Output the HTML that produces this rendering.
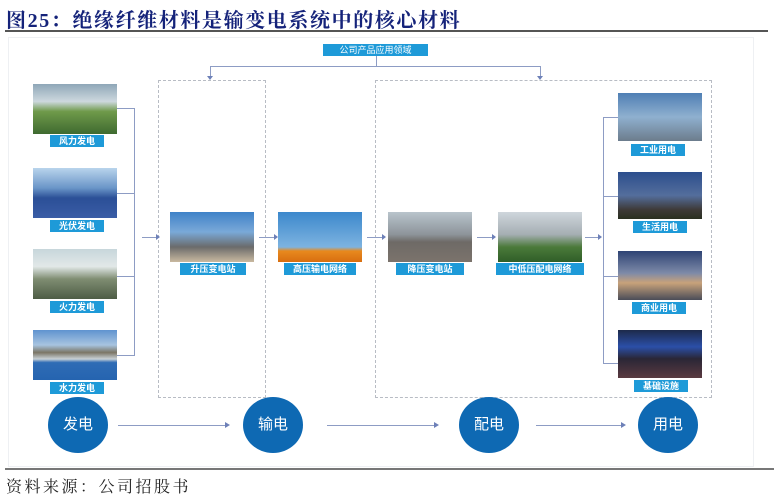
<!DOCTYPE html>
<html><head><meta charset="utf-8"><style>
body{margin:0;width:774px;height:498px;background:#fff;position:relative;overflow:hidden;font-family:"Liberation Sans","Noto Sans CJK SC",sans-serif}
.a{position:absolute}
.lbl{position:absolute;background:#1e9ad8;color:#fff;font-size:9px;font-weight:bold;text-align:center;line-height:12px;height:12px}
.img{position:absolute;width:84px;height:50px}
.c{position:absolute;width:60px;height:56px;border-radius:50%;background:#0e69b3;color:#fff;font-size:15px;text-align:center;line-height:56px}
.dash{position:absolute;border:1px dashed #b8bcc4}
.hl{position:absolute;height:1px;background:#8d9cc4}
.vl{position:absolute;width:1px;background:#8d9cc4}
</style></head><body>
<div class="a" style="left:6px;top:4px;font-family:'Liberation Serif','Noto Serif CJK SC',serif;font-size:20px;font-weight:bold;color:#15237a;letter-spacing:1.6px">图25：绝缘纤维材料是输变电系统中的核心材料</div>
<div class="a" style="left:5px;top:30px;width:763px;height:2px;background:#555"></div>
<div class="a" style="left:8px;top:37px;width:744px;height:428px;border:1px solid #eef0f3"></div>

<div class="lbl" style="left:323px;top:44px;width:105px;font-weight:normal">公司产品应用领域</div>
<div class="vl" style="left:376px;top:56px;height:10px"></div>
<div class="hl" style="left:210px;top:66px;width:331px"></div>
<div class="vl" style="left:210px;top:66px;height:12px"></div>
<div class="vl" style="left:540px;top:66px;height:12px"></div>

<div class="dash" style="left:158px;top:80px;width:106px;height:316px"></div>
<div class="dash" style="left:375px;top:80px;width:335px;height:316px"></div>

<!-- left -->
<div class="img" style="left:33px;top:84px;background:linear-gradient(#8fa7b8,#cdd8de 35%,#6f9a4a 55%,#3f6a30)"></div>
<div class="lbl" style="left:50px;top:135px;width:54px">风力发电</div>
<div class="img" style="left:33px;top:168px;background:linear-gradient(#b9d4ec,#6a95c8 40%,#2b4f97 60%,#3a5da6)"></div>
<div class="lbl" style="left:50px;top:220px;width:54px">光伏发电</div>
<div class="img" style="left:33px;top:249px;background:linear-gradient(#c7d6db,#e2e8e8 35%,#7f8d72 60%,#4d5c45)"></div>
<div class="lbl" style="left:50px;top:301px;width:54px">火力发电</div>
<div class="img" style="left:33px;top:330px;background:linear-gradient(#5f93cf,#a7c4e0 30%,#7b7565 45%,#c8d0d5 58%,#2f6cb5 65%,#2564b0)"></div>
<div class="lbl" style="left:50px;top:382px;width:54px">水力发电</div>
<div class="vl" style="left:134px;top:108px;height:248px"></div>
<div class="hl" style="left:117px;top:108px;width:17px"></div>
<div class="hl" style="left:117px;top:193px;width:17px"></div>
<div class="hl" style="left:117px;top:276px;width:17px"></div>
<div class="hl" style="left:117px;top:355px;width:17px"></div>
<div class="hl" style="left:142px;top:237px;width:16px"></div>

<!-- middle -->
<div class="img" style="left:170px;top:212px;background:linear-gradient(#3f82c8,#7aa9d8 40%,#6b6b6b 70%,#c9b9a0)"></div>
<div class="lbl" style="left:180px;top:263px;width:66px">升压变电站</div>
<div class="img" style="left:278px;top:212px;background:linear-gradient(#3c88cc,#7db3e0 70%,#e8891e 78%,#d86e10)"></div>
<div class="lbl" style="left:284px;top:263px;width:72px">高压输电网络</div>
<div class="img" style="left:388px;top:212px;background:linear-gradient(#b9c4cc,#8d949a 45%,#6e6a66 60%,#7b736c)"></div>
<div class="lbl" style="left:396px;top:263px;width:68px">降压变电站</div>
<div class="img" style="left:498px;top:212px;background:linear-gradient(#cfd6dc,#a5aeb3 45%,#4b7a3a 70%,#2f5e28)"></div>
<div class="lbl" style="left:496px;top:263px;width:88px">中低压配电网络</div>
<div class="hl" style="left:259px;top:237px;width:16px"></div>
<div class="hl" style="left:367px;top:237px;width:16px"></div>
<div class="hl" style="left:477px;top:237px;width:16px"></div>
<div class="hl" style="left:585px;top:237px;width:15px"></div>

<!-- right -->
<div class="vl" style="left:603px;top:117px;height:246px"></div>
<div class="hl" style="left:603px;top:117px;width:15px"></div>
<div class="hl" style="left:603px;top:196px;width:15px"></div>
<div class="hl" style="left:603px;top:276px;width:15px"></div>
<div class="hl" style="left:603px;top:363px;width:15px"></div>
<div class="img" style="left:618px;top:93px;height:48px;background:linear-gradient(#4f7fb4,#8fb0cf 50%,#6c7c8c)"></div>
<div class="lbl" style="left:631px;top:144px;width:54px">工业用电</div>
<div class="img" style="left:618px;top:172px;height:47px;background:linear-gradient(#2c4e8d,#546e9c 50%,#3e3a38 80%,#2a3020)"></div>
<div class="lbl" style="left:633px;top:221px;width:54px">生活用电</div>
<div class="img" style="left:618px;top:251px;height:49px;background:linear-gradient(#2e4374,#7d8aa8 45%,#c8a27a 65%,#4a4d58)"></div>
<div class="lbl" style="left:632px;top:302px;width:54px">商业用电</div>
<div class="img" style="left:618px;top:330px;height:48px;background:linear-gradient(#1d2a4a,#2b4fa8 35%,#2a2636 60%,#5a3a40)"></div>
<div class="lbl" style="left:634px;top:380px;width:54px">基础设施</div>

<!-- circles -->
<div class="c" style="left:48px;top:397px">发电</div>
<div class="c" style="left:243px;top:397px">输电</div>
<div class="c" style="left:459px;top:397px">配电</div>
<div class="c" style="left:638px;top:397px">用电</div>
<div class="hl" style="left:118px;top:425px;width:110px"></div>
<div class="hl" style="left:327px;top:425px;width:110px"></div>
<div class="hl" style="left:536px;top:425px;width:88px"></div>
<svg class="a" style="left:0;top:0" width="774" height="498" fill="#6d80b8">
<path d="M210 80l-3-4h6z M540 80l-3-4h6z M160 237l-4-3v6z M278 237l-4-3v6z M386 237l-4-3v6z M496 237l-4-3v6z M602 237l-4-3v6z M230 425l-5-3v6z M439 425l-5-3v6z M626 425l-5-3v6z"/>
</svg>

<div class="a" style="left:5px;top:468px;width:770px;height:2px;background:#777"></div>
<div class="a" style="left:6px;top:474px;font-family:'Liberation Serif','Noto Serif CJK SC',serif;font-size:16px;color:#222;letter-spacing:2.5px">资料来源：公司招股书</div>
</body></html>
